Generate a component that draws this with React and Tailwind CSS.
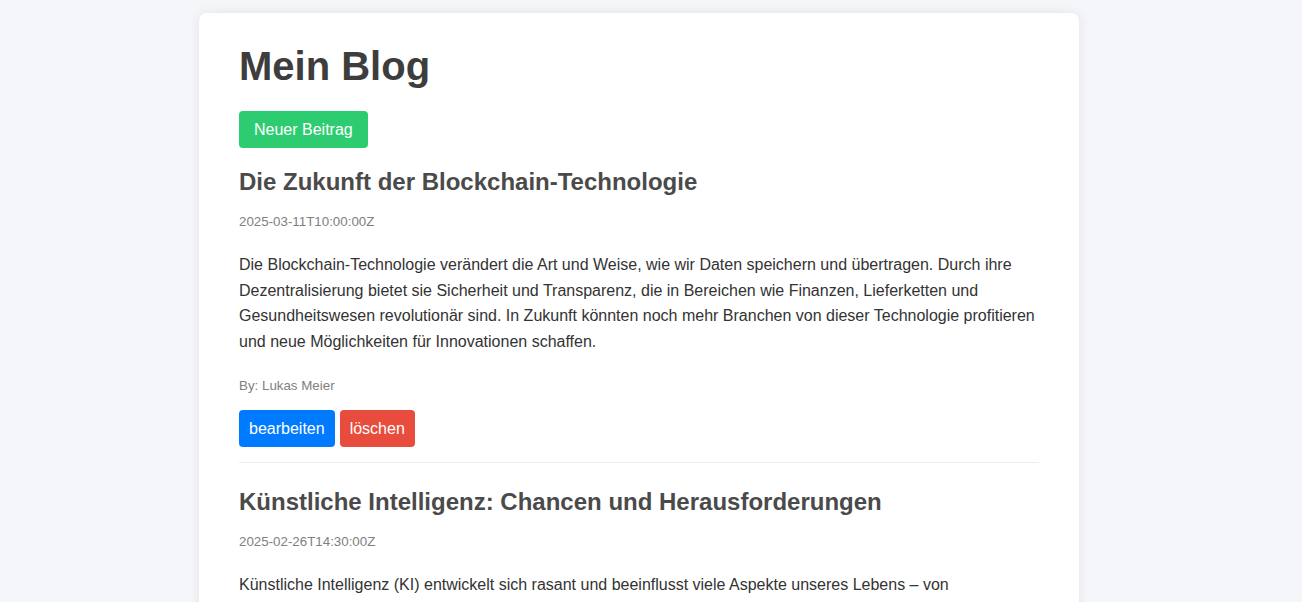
import React from 'react';

const posts = [
  {
    title: 'Die Zukunft der Blockchain-Technologie',
    date: '2025-03-11T10:00:00Z',
    content:
      'Die Blockchain-Technologie verändert die Art und Weise, wie wir Daten speichern und übertragen. Durch ihre Dezentralisierung bietet sie Sicherheit und Transparenz, die in Bereichen wie Finanzen, Lieferketten und Gesundheitswesen revolutionär sind. In Zukunft könnten noch mehr Branchen von dieser Technologie profitieren und neue Möglichkeiten für Innovationen schaffen.',
    author: 'Lukas Meier',
  },
  {
    title: 'Künstliche Intelligenz: Chancen und Herausforderungen',
    date: '2025-02-26T14:30:00Z',
    content:
      'Künstliche Intelligenz (KI) entwickelt sich rasant und beeinflusst viele Aspekte unseres Lebens – von personalisierten Empfehlungen bis hin zu selbstfahrenden Autos. Doch neben den Chancen gibt es auch Herausforderungen, etwa beim Datenschutz und bei ethischen Fragen.',
    author: 'Anna Schmidt',
  },
];

const Post = ({ post, last }) => (
  <article className={last ? 'pt-[25px]' : 'pb-[15px] border-b border-[#eeeeee]'}>
    <h2 className="text-[24px] leading-[28px] font-bold text-[#4a4a4a]">{post.title}</h2>
    <p className="mt-[18px] text-[13.33px] leading-[15px] text-[#808080]">{post.date}</p>
    <p className="mt-[23px] text-[16px] leading-[25.6px] text-[#333333]">{post.content}</p>
    <p className="mt-[24px] text-[13.33px] leading-[15px] text-[#808080]">By: {post.author}</p>
    <div className="mt-[17px] flex gap-[5px]">
      <button className="h-[37px] px-[10px] rounded-[4px] bg-[#007bff] text-white text-[16px]">bearbeiten</button>
      <button className="h-[37px] px-[10px] rounded-[4px] bg-[#e74c3c] text-white text-[16px]">löschen</button>
    </div>
  </article>
);

export default function App() {
  return (
    <div
      className="min-h-screen bg-[#f4f6fa] pt-[13px] pr-[24px]"
      style={{ fontFamily: '"Liberation Sans", Arial, sans-serif' }}
    >
      <div className="mx-auto w-[880px] bg-white rounded-[8px] shadow-[0_0_12px_rgba(0,0,0,0.08)] px-[40px] pt-[30px] pb-[40px]">
        <h1 className="text-[40px] leading-[46px] font-bold text-[#3d3d3d]">Mein Blog</h1>
        <button className="mt-[22px] h-[37px] px-[15px] rounded-[4px] bg-[#2ecc71] text-white text-[16px]">
          Neuer Beitrag
        </button>
        <div className="mt-[20px]">
          {posts.map((p, i) => (
            <Post key={i} post={p} last={i === posts.length - 1} />
          ))}
        </div>
      </div>
    </div>
  );
}
